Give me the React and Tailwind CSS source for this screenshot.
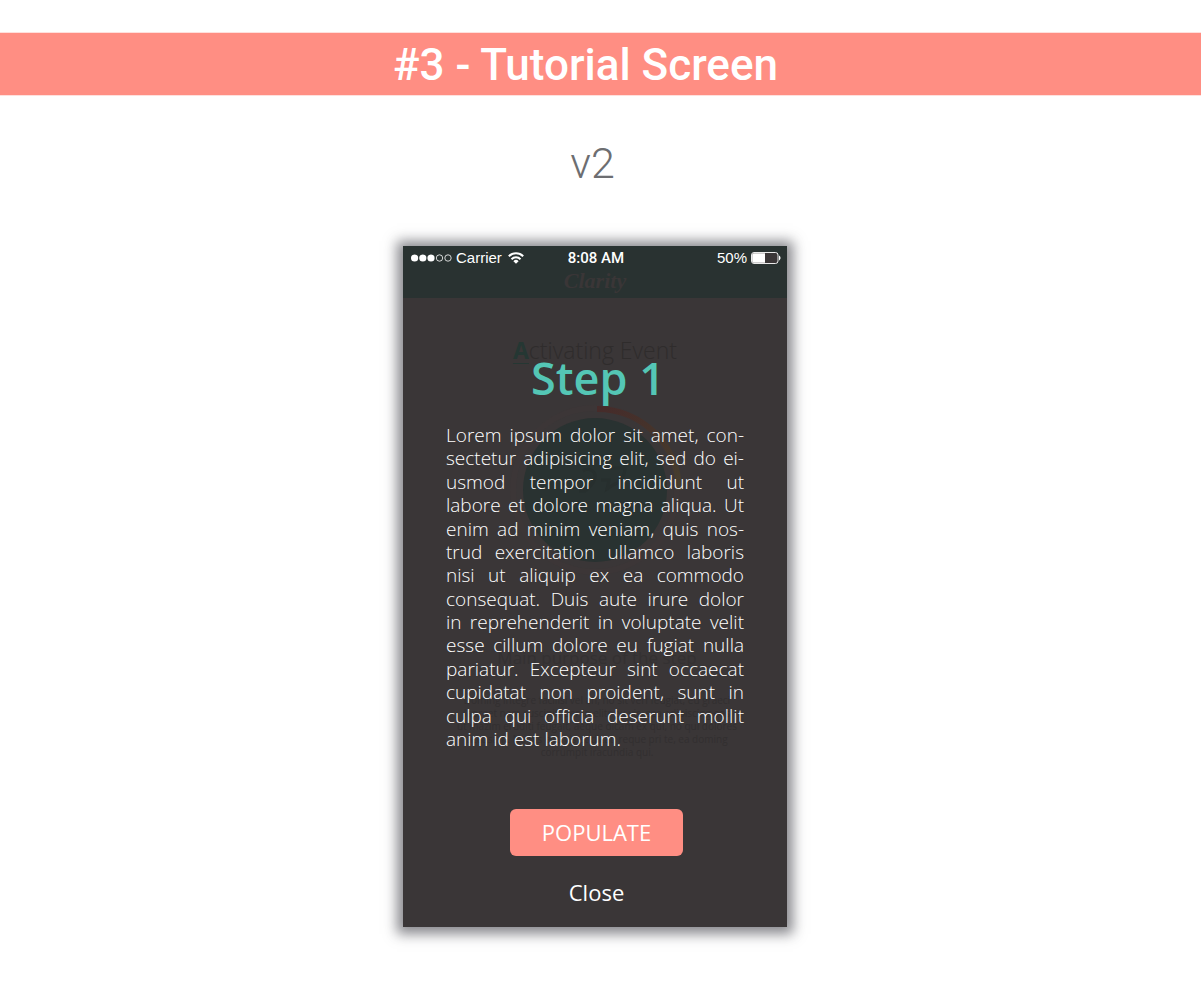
const LINES = [
  'Lorem ipsum dolor sit amet, con-',
  'sectetur adipisicing elit, sed do ei-',
  'usmod tempor incididunt ut',
  'labore et dolore magna aliqua. Ut',
  'enim ad minim veniam, quis nos-',
  'trud exercitation ullamco laboris',
  'nisi ut aliquip ex ea commodo',
  'consequat. Duis aute irure dolor',
  'in reprehenderit in voluptate velit',
  'esse cillum dolore eu fugiat nulla',
  'pariatur. Excepteur sint occaecat',
  'cupidatat non proident, sunt in',
  'culpa qui officia deserunt mollit',
];

function SignalDots() {
  return (
    <svg width="41" height="8" viewBox="0 0 41 8" aria-hidden="true">
      <circle cx="3.6" cy="4" r="3.6" fill="#fff" />
      <circle cx="11.8" cy="4" r="3.6" fill="#fff" />
      <circle cx="20" cy="4" r="3.6" fill="#fff" />
      <circle cx="28.5" cy="4" r="3.2" fill="none" stroke="#fff" strokeWidth="0.8" />
      <circle cx="37" cy="4" r="3.2" fill="none" stroke="#fff" strokeWidth="0.8" />
    </svg>
  );
}

function Wifi() {
  return (
    <svg width="16" height="12" viewBox="0 0 16 12" aria-hidden="true" fill="none" stroke="#fff" strokeWidth="2">
      <path d="M0.8 4.2a10.2 10.2 0 0 1 14.4 0" />
      <path d="M3.5 7.2a6.3 6.3 0 0 1 9 0" />
      <path d="M8 11.8L5.4 9.2a3.6 3.6 0 0 1 5.2 0z" fill="#fff" stroke="none" />
    </svg>
  );
}

function Battery() {
  return (
    <svg width="30" height="12" viewBox="0 0 30 12" aria-hidden="true">
      <rect x="0.5" y="0.5" width="26.5" height="11" rx="2.5" fill="#3a3637" stroke="#fff" strokeWidth="0.9" />
      <path d="M2.8 1.2H14V10.8H2.8A1.6 1.6 0 0 1 1.2 9.2V2.8A1.6 1.6 0 0 1 2.8 1.2z" fill="#fff" />
      <path d="M28 3.6c2 0.8 2 4 0 4.8z" fill="#fff" />
    </svg>
  );
}

function Dial() {
  return (
    <svg width="176" height="176" viewBox="0 0 176 176" aria-hidden="true">
      <defs>
        <linearGradient id="arc" x1="0" y1="0" x2="1" y2="1">
          <stop offset="0" stopColor="#462b2a" />
          <stop offset="0.5" stopColor="#45342b" />
          <stop offset="1" stopColor="#463e2e" />
        </linearGradient>
      </defs>
      <circle cx="88" cy="88" r="82" fill="none" stroke="#3c3637" strokeWidth="6" />
      <path d="M90 7A82 82 0 0 1 172 88" fill="none" stroke="url(#arc)" strokeWidth="6" />
      <circle cx="88" cy="88" r="72" fill="#293231" />
      <path
        d="M76 69c6-4 13 0 12 7-1 6-6 9-10 13h-6M96 66h22c0 9-6 15-12 17l-6 4 2-9h-8"
        fill="none"
        stroke="#272f2e"
        strokeWidth="3"
      />
    </svg>
  );
}

function Backdrop() {
  return (
    <div aria-hidden="true" className="col-start-1 row-start-1 flex flex-col items-center select-none">
      <div className="flex h-[52px] w-full items-end justify-center bg-[#293231]">
        <span className="pb-px font-['Liberation_Serif',serif] text-[22px] leading-8 font-bold text-[#3a3637] italic">
          Clarity
        </span>
      </div>
      <p className="mt-9 font-['Open_Sans',sans-serif] text-[23px] leading-8 font-light text-[#2f2c2c]">
        <span className="font-bold text-[#253733] underline decoration-1 underline-offset-4">A</span>ctivating Event
      </p>
      <div className="mt-9">
        <Dial />
      </div>
      <p className="mt-[68px] pl-1 font-['Open_Sans',sans-serif] text-[17px] leading-6 text-[#343132]">
        Main purpose of the step
      </p>
      <p className="mt-6 pl-1 text-center font-['Open_Sans',sans-serif] text-[10px] leading-[13px] text-[#322f30]">
        Doming integre facilisi vel an, no sit veri feugiat, eu graeci
        <br />
        laoreet nam suscipit, per in elitr eu vis, sea adipiscing eos
        <br />
        ut mazim eruditi feugait, aeque dicam ex qui, no qui dolores
        <br />
        accusam. No his elit, vis et dicat, reque pri te, ea doming
        <br />
        corrumpit iracundia qui.
      </p>
    </div>
  );
}

function StatusBar() {
  return (
    <div className="grid h-6 grid-cols-3 items-center pr-1.5 pl-2 font-['Liberation_Sans',sans-serif] text-[15px] text-white">
      <div className="flex items-center gap-1">
        <SignalDots />
        <span>Carrier</span>
        <span className="pl-0.5">
          <Wifi />
        </span>
      </div>
      <span className="text-center font-['Roboto',sans-serif] font-medium">8:08 AM</span>
      <div className="flex items-center justify-end gap-1">
        <span>50%</span>
        <Battery />
      </div>
    </div>
  );
}

function Tutorial() {
  return (
    <section className="relative col-start-1 row-start-1 flex flex-col font-['Open_Sans',sans-serif] text-white">
      <StatusBar />
      <h2 className="mt-[78px] pl-1.5 text-center text-[45px] leading-[60px] font-semibold text-[#54c6b5]">Step 1</h2>
      <p className="mx-[43px] mt-4 flex min-h-[327px] flex-col justify-between text-[19px] leading-[23px] font-light">
        {LINES.map((line) => (
          <span key={line} className="block text-justify [text-align-last:justify]">
            {line}
          </span>
        ))}
        <span className="block">anim id est laborum.</span>
      </p>
      <div className="mt-[58px] flex flex-col items-center gap-5 pb-[19px] pl-[3px] text-[22px]">
        <button type="button" className="h-[47px] rounded-md bg-[#ff8e83] px-8">
          POPULATE
        </button>
        <button type="button" className="leading-8">
          Close
        </button>
      </div>
    </section>
  );
}

export default function App() {
  return (
    <main className="flex min-h-screen flex-col items-center bg-white pt-8 font-['Roboto',sans-serif]">
      <h1 className="w-full border-y border-[#ffe0dd] bg-[#ff8e83] bg-clip-padding pt-0.5 pr-[30px] text-center text-[44px] leading-[60px] font-medium text-white">
        #3 - Tutorial Screen
      </h1>
      <p className="mt-[35px] pr-4 text-[43px] leading-[64px] font-light text-[#6d6e71]">v2</p>
      <div className="mt-[51px] mr-[11px] mb-16 grid w-full max-w-[384px] bg-[#3a3637] shadow-[0_1px_12px_6px_rgba(50,50,58,0.58)]">
        <Backdrop />
        <Tutorial />
      </div>
    </main>
  );
}
